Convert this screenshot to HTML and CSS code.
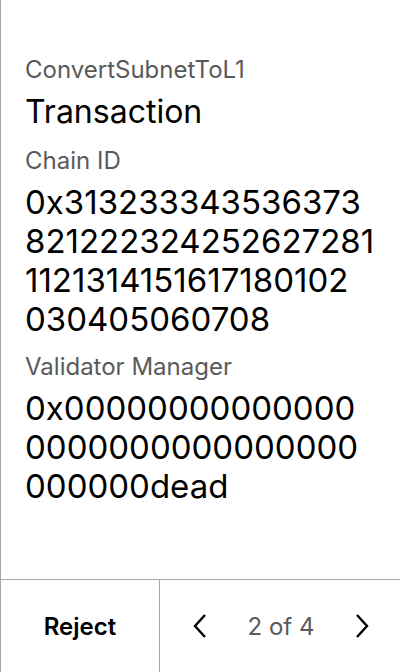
FILE: index.html
```html
<!DOCTYPE html>
<html>
<head>
<meta charset="utf-8">
<link rel="stylesheet" href="styles.css">
</head>
<body>
<div class="screen">
  <div class="content">
    <div class="label">ConvertSubnetToL1</div>
    <div class="title">Transaction</div>
    <div class="label">Chain ID</div>
    <div class="value">0x313233343536373<br>821222324252627281<br>1121314151617180102<br>030405060708</div>
    <div class="label">Validator Manager</div>
    <div class="value">0x00000000000000<br>0000000000000000<br>000000dead</div>
  </div>
  <div class="footer">
    <div class="reject">Reject</div>
    <div class="pager">
      <svg class="chev" width="16" height="26" viewBox="0 0 16 26"><path d="M13 2 L3 13 L13 24" fill="none" stroke="#000" stroke-width="2.4"/></svg>
      <span class="count">2 of 4</span>
      <svg class="chev" width="16" height="26" viewBox="0 0 16 26"><path d="M3 2 L13 13 L3 24" fill="none" stroke="#000" stroke-width="2.4"/></svg>
    </div>
  </div>
</div>
</body>
</html>
```
FILE: styles.css
```css
html, body { margin: 0; padding: 0; background: #fff; }
.screen {
  width: 400px; height: 672px; box-sizing: border-box;
  border-left: 1px solid #a8a8a8;
  display: flex; flex-direction: column;
  font-family: Inter, "Noto Sans", sans-serif;
}
.content { flex: 1; padding: 54px 0 0 24px; }
.label { font-size: 24px; line-height: 32px; color: #5a5a5a; margin-bottom: 6px; }
.title { font-size: 32px; line-height: 40px; color: #000; margin: 0 0 13px; }
.value { font-size: 33px; line-height: 39px; color: #000; margin-bottom: 12px; white-space: nowrap; }
.footer {
  height: 92px; border-top: 1px solid #a8a8a8;
  display: grid; grid-template-columns: 159px 1fr;
}
.reject {
  border-right: 1px solid #a8a8a8;
  display: flex; align-items: center; justify-content: center;
  font-size: 24px; font-weight: 600; color: #000;
}
.pager { display: flex; align-items: center; justify-content: space-between; padding: 0 30px 0 32px; }
.count { font-size: 24px; color: #5a5a5a; }
.chev { display: block; }
```
